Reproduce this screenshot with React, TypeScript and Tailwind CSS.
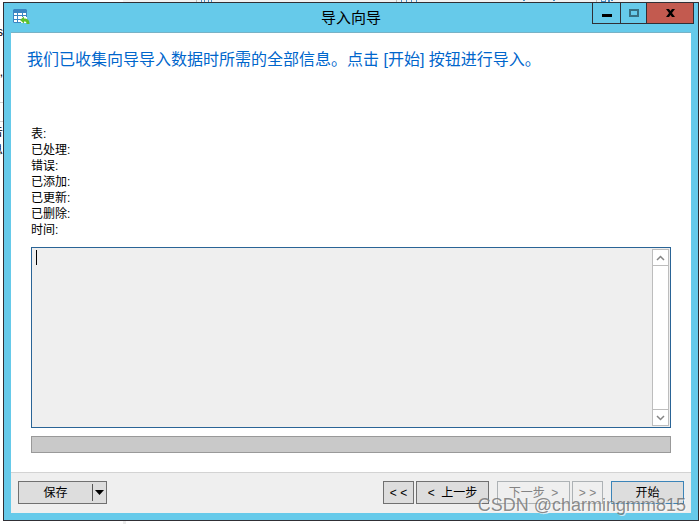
import type { ReactNode } from "react";

const stats = ["表:", "已处理:", "错误:", "已添加:", "已更新:", "已删除:", "时间:"];

function WizardButton({ children, className, disabled }: { children: ReactNode; className: string; disabled?: boolean }) {
  return (
    <button
      type="button"
      disabled={disabled}
      className={`h-[23px] border text-center whitespace-pre text-black disabled:text-[#838383] ${disabled ? "border-[#adb2b5] bg-[#efefef]" : "bg-[#dddddd]"} ${className}`}
    >
      {children}
    </button>
  );
}

function ImportIcon() {
  return (
    <svg width="17" height="16" viewBox="0 0 17 16" aria-hidden="true">
      <path d="M1 0h12l1 1v13H1l-1-1V1z" fill="#3b86c2" />
      <path d="M1 4h3v2H1zM5 4h4v2H5zM10 4h3v2h-3zM1 7h3v3H1zM5 7h4v3H5zM10 7h3v3h-3zM1 11h3v2H1zM5 11h4v2H5z" fill="#fff" />
      <path d="M8 8h6v6H8z" fill="#fff" />
      <path d="M7 11l4-3.500v2c3.500 0 5.500 1.500 5.500 5.500h-3c0-2-.5-2.500-2.500-2.500v2z" fill="#5fc02c" />
    </svg>
  );
}

function TitleBar() {
  return (
    <header className="relative flex h-[29px] items-start justify-between">
      <div className="pt-[6px] pl-[2px]">
        <ImportIcon />
      </div>
      <h1 className="absolute inset-x-0 top-[5px] text-center text-[15px] leading-5">导入向导</h1>
      <div className="relative -mt-px mr-[-3px] flex h-[22px] border border-[#302f35]">
        <button type="button" aria-label="最小化" className="grid w-7 place-items-center border-r border-[#302f35]">
          <span className="mt-1 h-[3px] w-[10px] bg-black" />
        </button>
        <button type="button" aria-label="最大化" className="grid w-[26px] place-items-center border-r border-[#302f35]">
          <span className="h-2 w-[10px] border-2 border-[#376f82]" />
        </button>
        <button type="button" aria-label="关闭" className="grid w-[46px] place-items-center bg-[#c35a4f]">
          <svg width="9" height="8" viewBox="0 0 9 8" aria-hidden="true">
            <path d="M0 0h3l1.500 2L6 0h3L6 4l3 4H6L4.500 6 3 8H0l3-4z" />
          </svg>
        </button>
      </div>
    </header>
  );
}

function LogBox() {
  return (
    <div className="flex h-[181px] border border-[#2a6496] bg-[#efefef] p-px">
      <div className="relative flex min-w-0 flex-1">
        <textarea aria-label="日志" className="min-w-0 flex-1 resize-none bg-transparent px-1 outline-none" />
        <span className="absolute top-px left-[3px] h-[15px] w-px bg-black" />
      </div>
      <div className="flex w-[17px] flex-col justify-between border border-[#bdbdbd] bg-white">
        <button type="button" aria-label="向上滚动" className="grid h-4 place-items-center border-b border-[#bdbdbd]">
          <svg width="9" height="6" viewBox="0 0 9 6" fill="none" stroke="#858585" strokeWidth="1.500" aria-hidden="true">
            <path d="M1 5l3.500-3.500L8 5" />
          </svg>
        </button>
        <button type="button" aria-label="向下滚动" className="grid h-4 place-items-center border-t border-[#bdbdbd]">
          <svg width="9" height="6" viewBox="0 0 9 6" fill="none" stroke="#858585" strokeWidth="1.500" aria-hidden="true">
            <path d="M1 1l3.500 3.500L8 1" />
          </svg>
        </button>
      </div>
    </div>
  );
}

function Footer() {
  return (
    <footer className="flex h-[41px] items-start justify-between border-t border-[#d3d3d3] bg-[#efefef] px-[7px] pt-2">
      <div className="flex h-[23px] w-[89px] border border-[#707070] bg-[#dddddd]">
        <button type="button" className="flex-1">保存</button>
        <button type="button" aria-label="更多保存选项" className="my-[2px] grid w-[14px] place-items-center border-l border-[#555555]">
          <svg width="9" height="5" viewBox="0 0 9 5" aria-hidden="true">
            <path d="M0 0h9L4.500 5z" />
          </svg>
        </button>
      </div>
      <div className="flex">
        <WizardButton className="w-[31px] border-[#707070]">{"< <"}</WizardButton>
        <WizardButton className="ml-[2px] w-[73px] border-[#707070]">{"<  上一步"}</WizardButton>
        <WizardButton className="ml-2 w-[73px]" disabled>{"下一步  >"}</WizardButton>
        <WizardButton className="ml-[2px] w-[31px]" disabled>{"> >"}</WizardButton>
        <WizardButton className="ml-2 w-[73px] border-[#3c84b8]">开始</WizardButton>
      </div>
    </footer>
  );
}

/* Slivers of the application window that lies behind the wizard. */
function Backdrop() {
  return (
    <div aria-hidden="true" className="pointer-events-none absolute inset-0">
      <div className="absolute inset-y-0 left-0 flex w-[3px] flex-col items-end overflow-hidden pt-6">
        <span>s</span>
        <span className="mt-6">e,</span>
        <span className="mt-[22px] h-5 w-full shrink-0 border-y border-[#d0d0d0]" />
        <span className="mt-[2px]">告</span>
        <span className="mt-[2px]">息</span>
      </div>
      <div className="absolute top-0 right-0 left-[123px] h-[2px] bg-[#f1f1f1]">
        <svg width="500" height="2" viewBox="0 0 500 2">
          <path d="M73 0h1v2h-1zM273 0h1v2h-1zM473 0h1v2h-1z" fill="#bdbdbd" />
          <path d="M78 0h1v2h-1zM81 0h1v2h-1zM85 0h1v2h-1zM88 0h1v2h-1zM278 0h1v2h-1zM283 0h1v2h-1zM288 0h1v2h-1zM293 0h1v2h-1zM400 0h2v1h-2zM430 0h2v1h-2zM478 0h1v2h-1zM479 1h3v1h-3zM482 0h1v2h-1zM485 0h2v2h-2zM488 0h2v1h-2z" fill="#4a90c8" />
        </svg>
      </div>
      <div className="absolute bottom-0 left-[123px] h-[3px] w-[3px] bg-[#ececec]" />
    </div>
  );
}

export default function App() {
  return (
    <div className="relative flex min-h-screen flex-col overflow-hidden bg-white pt-[2px] pr-px pb-[3px] pl-[3px] font-['Liberation_Sans','Noto_Sans_CJK_SC',sans-serif] text-[12px] leading-4 text-black">
      <Backdrop />
      <main className="relative flex flex-1 flex-col border border-[#302f35] bg-[#66caea] px-[7px] pb-[7px]">
        <TitleBar />
        <div className="flex flex-1 flex-col border-t border-[#78b2c6] bg-white">
          <section className="flex-1">
            <h2 className="px-4 pt-[15px] text-[16px] leading-6 text-[#0066cc]">
              我们已收集向导导入数据时所需的全部信息。点击 [开始] 按钮进行导入。
            </h2>
            <div className="px-5 pt-[54px]">
              <ul>
                {stats.map((label) => (
                  <li key={label}>{label}</li>
                ))}
              </ul>
              <div className="mt-[9px]">
                <LogBox />
              </div>
              <div role="progressbar" aria-label="导入进度" aria-valuenow={0} className="mt-2 h-[17px] border border-[#999999] bg-[#c9c9c9]" />
            </div>
          </section>
          <Footer />
        </div>
      </main>
      <p className="pointer-events-none absolute right-[14px] bottom-[7px] text-[18px] leading-6 text-[#6f6f6f]/80 [text-shadow:1px_1px_0_#ffffffaa]">CSDN @charmingmm815</p>
    </div>
  );
}
